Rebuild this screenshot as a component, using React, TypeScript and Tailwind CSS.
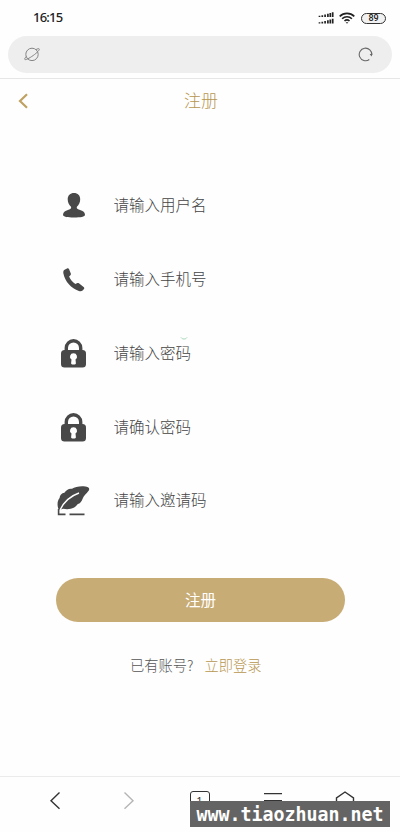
import type { ReactNode } from "react";

function UserIcon() {
  return (
    <svg width="22" height="25" viewBox="0 0 22 25" fill="#484848">
      <path d="M11 0C7.200 0 4.700 2.400 4.700 6.200c0 3.300 1.300 5.800 3.300 7.500.4 1.300 0 2-1.200 2.500L3 17.700C1 18.600 0 20 0 22c0 1.700 4.500 2.500 11 2.500S22 23.700 22 22c0-2-1-3.400-3-4.300l-3.900-1.500c-1.200-.5-1.600-1.200-1.200-2.500 2-1.700 3.300-4.200 3.300-7.500C17.200 2.400 14.800 0 11 0z" />
    </svg>
  );
}

function PhoneIcon() {
  return (
    <svg width="22" height="24" viewBox="0 0 22 24" fill="#484848">
      <path d="M1.600 1.800 4 .5c.8-.4 1.600-.2 2 .6l1.800 4.500c.3.800 0 1.400-.6 1.900L6.100 8.500c1.300 3 3.500 5.700 6.300 7.500l1.500-.8c.7-.4 1.400-.4 2 .1l4.700 3.600c.7.600.9 1.300.4 2l-1.400 1.600c-.8.8-2.300 1-3.700.5C8.300 20.500 2 13.500.4 5.500.1 3.700.4 2.500 1.600 1.800z" />
    </svg>
  );
}

function LockIcon() {
  return (
    <svg width="25" height="29" viewBox="0 0 25 29">
      <path d="M5.300 13V9a7.200 7.200 0 0 1 14.400 0v4" fill="none" stroke="#484848" strokeWidth="3.400" />
      <rect x="0" y="11" width="25" height="17.500" rx="3.500" fill="#484848" />
      <path d="M12.500 14.200a3.500 3.500 0 0 0-2 6.400l-.4 3.600c0 .8.700 1.300 2.400 1.300s2.400-.5 2.400-1.300l-.4-3.600a3.500 3.500 0 0 0-2-6.400z" fill="#fff" />
    </svg>
  );
}

function QuillIcon() {
  return (
    <svg width="33" height="30" viewBox="0 0 33 30" fill="none">
      <path d="M2 24C-.2 20 .2 14.500 2.600 12c.2-3 2-5 4.800-5.300C9 4 12 2.200 15 2.800 18.500.4 26.500-.6 31 1.300c1.700 1 1.300 2.600.4 3.800-2 2.600-4.800 4.800-5.900 7.800-.8 2.800-2.500 4.300-4.700 5.200C18.300 21.800 14 24 6 22.800z" fill="#484848" />
      <path d="M2.600 25C6 17 12 10.500 22 7" stroke="#fff" strokeWidth="1.400" />
      <path d="M1.600 23v5.400h6.900M12.500 28.400h15" stroke="#484848" strokeWidth="1.600" />
    </svg>
  );
}

const fields: { id: string; placeholder: string; icon: ReactNode; type: string }[] = [
  { id: "username", placeholder: "请输入用户名", icon: <UserIcon />, type: "text" },
  { id: "phone", placeholder: "请输入手机号", icon: <PhoneIcon />, type: "tel" },
  { id: "password", placeholder: "请输入密码", icon: <LockIcon />, type: "password" },
  { id: "confirm", placeholder: "请确认密码", icon: <LockIcon />, type: "password" },
  { id: "invite", placeholder: "请输入邀请码", icon: <QuillIcon />, type: "text" },
];

function StatusBar() {
  return (
    <div className="flex h-9 items-center pl-[33px] pr-[14px] text-[#222]">
      <span className="font-['Noto_Sans'] text-[13px] font-medium tracking-[-0.8px]">16:15</span>
      <div className="ml-auto flex items-center">
        <svg width="16" height="12" viewBox="0 0 16 12" stroke="#222" strokeWidth="1.700">
          <path d="M1.500 5V3.800M4.300 5V3.200M7.100 5V2.500M9.900 5V1.800M12.300 5V1M14.700 5V.3M1.500 11.500v-1.200M4.300 11.500V9.800M7.100 11.500V9M9.900 11.500V8.200M12.300 11.500V7.500M14.700 11.500V6.800" />
        </svg>
        <svg className="ml-[5px]" width="16" height="12" viewBox="0 0 16 12" fill="none" stroke="#222" strokeWidth="1.600">
          <path d="M.7 4.300a10.500 10.500 0 0 1 14.600 0M3.100 6.800a7 7 0 0 1 9.800 0M5.500 9a3.700 3.700 0 0 1 5 0" />
          <path d="M6.700 10.200h2.600L8 11.700z" fill="#222" stroke="none" />
        </svg>
        <span className="ml-[6px] flex h-[11px] w-[25px] items-center justify-center rounded-full border border-[#333] bg-[#f1f1f1] font-['Roboto'] text-[9px] font-medium leading-none">
          89
        </span>
      </div>
    </div>
  );
}

function AddressBar() {
  return (
    <div className="mx-2 flex h-[37px] items-center justify-between rounded-full bg-[#eee] pl-4 pr-[19px]">
      <svg width="16" height="15" viewBox="0 0 16 15" fill="none" stroke="#858585" strokeWidth="1">
        <circle cx="8" cy="7.400" r="6.200" />
        <path d="M12 2.600c1.700-1 2.900-1.200 3.200-.7.600 1-2 3.700-6 6.600-4 2.800-7.700 4.800-8.400 3.900-.4-.6.300-1.700 1.800-3.100" />
      </svg>
      <svg width="15" height="15" viewBox="0 0 15 15" fill="none" stroke="#666" strokeWidth="1.100">
        <path d="M11.300 12.500A6.300 6.300 0 1 1 13.800 8" />
        <path d="m11.600 7.300 2.200 2.300.5-3.200z" fill="#666" stroke="none" />
      </svg>
    </div>
  );
}

function BottomNav() {
  return (
    <nav className="flex h-14 shrink-0 justify-between border-t border-[#ebebeb] pl-[49px] pr-[45px] pt-[14px]">
      <svg width="12" height="19" viewBox="0 0 12 19" fill="none" stroke="#333" strokeWidth="1.400">
        <path d="M10.500 1.500 2 9.700l8.500 8.100" />
      </svg>
      <svg className="ml-[18px]" width="12" height="19" viewBox="0 0 12 19" fill="none" stroke="#b5b5b5" strokeWidth="1.400">
        <path d="m1.500 1.500 8.500 8.200-8.500 8.100" />
      </svg>
      <span className="ml-[11px] mr-[2px] flex h-5 w-5 justify-center rounded-[3px] border-[1.5px] border-[#333] pt-[3px] font-['Noto_Sans'] text-[11px] font-normal leading-none text-[#333]">
        1
      </span>
      <svg className="ml-[9px]" width="18" height="19" viewBox="0 0 18 19" fill="none" stroke="#333" strokeWidth="1.300">
        <path d="M0 2.600h18M0 9.600h18M0 16.600h18" />
      </svg>
      <svg className="ml-[9px]" width="20" height="20" viewBox="0 0 20 20" fill="none" stroke="#333" strokeWidth="1.400">
        <path d="M1.500 18.500V6.800L10 1l8.500 5.800v11.700z" />
      </svg>
    </nav>
  );
}

export default function App() {
  return (
    <div className="relative flex h-[832px] w-[400px] flex-col overflow-hidden bg-[#fefefe] font-['Noto_Sans_CJK_SC',sans-serif] font-light">
      <StatusBar />
      <AddressBar />

      <header className="mt-[5px] grid h-[45px] grid-cols-3 items-center border-t border-[#e6e6e6]">
        <svg className="ml-[18px]" width="11" height="16" viewBox="0 0 11 16" fill="none" stroke="#bfa262" strokeWidth="2.200">
          <path d="M9 1.200 2 8l7 6.800" />
        </svg>
        <h1 className="pb-[4px] pl-[2px] text-center text-[17px] leading-none text-[#b8964f]">注册</h1>
      </header>

      <main className="flex flex-1 flex-col">
        <form className="mt-[46px]">
          {fields.map((field) => (
            <label key={field.id} className="flex h-[73.75px] items-center">
              <span className="ml-[53px] flex w-[41px] shrink-0 justify-center">{field.icon}</span>
              <input
                type={field.type}
                placeholder={field.placeholder}
                className="ml-[19.5px] w-[230px] bg-transparent pb-[2px] text-[15.5px] text-[#444] outline-none placeholder:text-[#444]"
              />
            </label>
          ))}
          <button
            type="button"
            className="ml-14 mt-[40px] flex h-11 w-[289px] items-center justify-center rounded-full bg-[#c8ac76] pb-[1px] text-[15.5px] font-normal text-white"
          >
            注册
          </button>
        </form>
        <p className="ml-[130px] mt-[32px] flex text-[14.25px] leading-[21px] text-[#555]">
          已有账号?
          <a href="#login" className="ml-[11px] text-[#b8964f]">立即登录</a>
        </p>
      </main>

      <BottomNav />

      <svg className="absolute left-[180px] top-[336px]" width="8" height="5" viewBox="0 0 8 5" fill="none" stroke="#a0d6b8">
        <path d="M1 1.500c1.500 2 4.500 2 6 0" />
      </svg>
      <div className="absolute bottom-[5px] right-[10px] flex h-[26px] w-[200px] items-center justify-center bg-[#646464] font-['DejaVu_Sans_Mono'] text-[18.3px] font-bold leading-none text-white">
        <span className="scale-y-110">www.tiaozhuan.net</span>
      </div>
    </div>
  );
}
